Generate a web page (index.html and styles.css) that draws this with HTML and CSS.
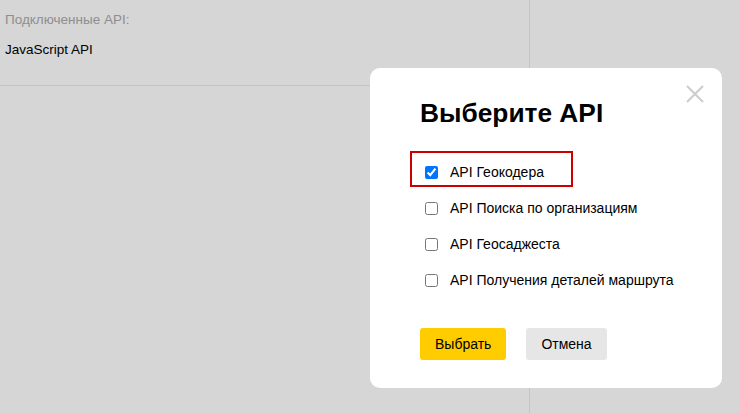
FILE: index.html
```html
<!DOCTYPE html>
<html lang="ru">
<head>
<meta charset="utf-8">
<title>Выберите API</title>
<link rel="stylesheet" href="styles.css">
</head>
<body>
<div class="page">
  <div class="panel">
    <div class="panel-head">
      <div class="label">Подключенные API:</div>
      <div class="value">JavaScript API</div>
    </div>
  </div>
</div>

<div class="modal">
  <button class="close" aria-label="Закрыть">
    <svg width="18" height="18" viewBox="0 0 18 18"><path d="M1 1L17 17M17 1L1 17" stroke="#cccccc" stroke-width="2" fill="none"/></svg>
  </button>
  <h1 class="title">Выберите API</h1>
  <div class="options">
    <label class="option"><input type="checkbox" checked><span>API Геокодера</span></label>
    <label class="option"><input type="checkbox"><span>API Поиска по организациям</span></label>
    <label class="option"><input type="checkbox"><span>API Геосаджеста</span></label>
    <label class="option"><input type="checkbox"><span>API Получения деталей маршрута</span></label>
  </div>
  <div class="actions">
    <button class="btn btn-primary">Выбрать</button>
    <button class="btn btn-secondary">Отмена</button>
  </div>
  <div class="highlight"></div>
</div>
</body>
</html>
```

FILE: styles.css
```css
html, body {
  margin: 0;
  padding: 0;
}
body {
  background: #d6d6d6;
  font-family: "Liberation Sans", Arial, sans-serif;
  width: 740px;
  height: 413px;
  overflow: hidden;
  position: relative;
}
.page {
  display: flex;
}
.panel {
  width: 530px;
  border-right: 1px solid #c4c4c4;
  height: 413px;
  box-sizing: border-box;
}
.panel-head {
  height: 86px;
  box-sizing: border-box;
  border-bottom: 1px solid #c4c4c4;
  padding: 12px 0 0 5px;
}
.label {
  font-size: 13.5px;
  color: #8e8e8e;
  line-height: 16px;
}
.value {
  font-size: 13.5px;
  color: #000;
  line-height: 16px;
  margin-top: 14px;
}
.modal {
  position: absolute;
  left: 370px;
  top: 68px;
  width: 352px;
  height: 320px;
  background: #fff;
  border-radius: 10px;
  box-sizing: border-box;
  padding: 29px 0 0 50px;
}
.close {
  position: absolute;
  right: 18px;
  top: 17px;
  width: 18px;
  height: 18px;
  padding: 0;
  border: 0;
  background: none;
}
.close svg {
  display: block;
}
.title {
  margin: 0;
  font-size: 26.3px;
  line-height: 32px;
  font-weight: bold;
  color: #000;
}
.options {
  margin-top: 35px;
  display: flex;
  flex-direction: column;
  gap: 20px;
}
.option {
  display: flex;
  align-items: center;
  height: 16px;
  font-size: 14px;
  color: #000;
  padding-left: 5px;
}
.option input {
  margin: 0 12px 0 0;
  width: 13px;
  height: 13px;
}
.actions {
  display: flex;
  gap: 20px;
  margin-top: 40px;
}
.btn {
  height: 32px;
  border: 0;
  border-radius: 3px;
  font-family: "Liberation Sans", Arial, sans-serif;
  font-size: 14px;
  color: #000;
  padding: 0 15px;
}
.btn-primary {
  background: #ffcc00;
}
.btn-secondary {
  background: #e6e6e6;
}
.highlight {
  position: absolute;
  left: 40px;
  top: 83px;
  width: 163px;
  height: 36px;
  border: 2px solid #cc0000;
  box-sizing: border-box;
}
```
